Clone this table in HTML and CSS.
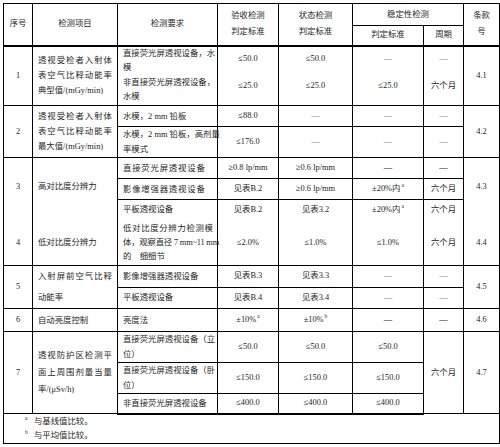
FILE: index.html
```html
<!DOCTYPE html>
<html lang="zh-CN">
<head>
<meta charset="utf-8">
<title>透视设备检测要求</title>
<link rel="stylesheet" href="styles.css">
</head>
<body>
<div class="page">
<table class="spec">
  <colgroup>
    <col class="c1"><col class="c2"><col class="c3"><col class="c4"><col class="c5"><col class="c6"><col class="c7"><col class="c8">
  </colgroup>
  <thead>
    <tr class="h-a">
      <th rowspan="2">序号</th>
      <th rowspan="2">检测项目</th>
      <th rowspan="2">检测要求</th>
      <th rowspan="2" class="two">验收检测<br>判定标准</th>
      <th rowspan="2" class="two">状态检测<br>判定标准</th>
      <th colspan="2">稳定性检测</th>
      <th rowspan="2" class="two">条款<br>号</th>
    </tr>
    <tr class="h-b">
      <th>判定标准</th>
      <th>周期</th>
    </tr>
  </thead>
  <tbody>
    <tr class="r-1">
      <td>1</td>
      <td class="item"><div class="jl">透视受检者入射体</div><div class="jl">表空气比释动能率</div><div>典型值/(mGy/min)</div></td>
      <td class="req r1req"><div class="jl">直接荧光屏透视设备，水</div><div>模</div><div class="jl">非直接荧光屏透视设备，</div><div>水模</div></td>
      <td class="pair"><div>≤50.0</div><div class="p2">≤25.0</div></td>
      <td class="pair"><div>≤50.0</div><div class="p2">≤25.0</div></td>
      <td class="pair"><div class="dash">—</div><div class="p2">≤25.0</div></td>
      <td class="pair"><div class="dash">—</div><div class="p2">六个月</div></td>
      <td>4.1</td>
    </tr>
    <tr class="r-2a">
      <td rowspan="2">2</td>
      <td rowspan="2" class="item"><div class="jl">透视受检者入射体</div><div class="jl">表空气比释动能率</div><div>最大值/(mGy/min)</div></td>
      <td class="req">水模，2 mm 铅板</td>
      <td>≤88.0</td>
      <td class="dash">—</td>
      <td class="dash">—</td>
      <td class="dash">—</td>
      <td rowspan="2">4.2</td>
    </tr>
    <tr class="r-2b">
      <td class="req"><div class="jl">水模，2 mm 铅板，高剂量</div><div>率模式</div></td>
      <td>≤176.0</td>
      <td class="dash">—</td>
      <td class="dash">—</td>
      <td class="dash">—</td>
    </tr>
    <tr class="r-3a">
      <td rowspan="3" class="dual"><div class="d1">3</div><div class="d2">4</div></td>
      <td rowspan="3" class="dual item"><div class="d1">高对比度分辨力</div><div class="d2">低对比度分辨力</div></td>
      <td class="req wide">直接荧光屏透视设备</td>
      <td>≥0.8 lp/mm</td>
      <td>≥0.6 lp/mm</td>
      <td class="dash strong">—</td>
      <td class="dash strong">—</td>
      <td rowspan="3" class="dual"><div class="d1">4.3</div><div class="d2">4.4</div></td>
    </tr>
    <tr class="r-3b">
      <td class="req wide">影像增强器透视设备</td>
      <td>见表B.2</td>
      <td>≥0.6 lp/mm</td>
      <td>±20%内<sup>a</sup></td>
      <td>六个月</td>
    </tr>
    <tr class="r-3c">
      <td class="req stack"><div class="s1">平板透视设备</div><div class="s3"><div class="jl">低对比度分辨力检测模</div><div class="jl tight">体，观察直径 7 mm~11 mm</div><div>的　细细节</div></div></td>
      <td class="stack"><div class="s1">见表B.2</div><div class="s2">≤2.0%</div></td>
      <td class="stack"><div class="s1">见表3.2</div><div class="s2">≤1.0%</div></td>
      <td class="stack"><div class="s1">±20%内<sup>a</sup></div><div class="s2">≤1.0%</div></td>
      <td class="stack"><div class="s1">六个月</div><div class="s2">六个月</div></td>
    </tr>
    <tr class="r-5a">
      <td rowspan="2">5</td>
      <td rowspan="2" class="item loose"><div class="jl">入射屏前空气比释</div><div>动能率</div></td>
      <td class="req">影像增强器透视设备</td>
      <td>见表B.3</td>
      <td>见表3.3</td>
      <td class="dash">—</td>
      <td class="dash">—</td>
      <td rowspan="2">4.5</td>
    </tr>
    <tr class="r-5b">
      <td class="req">平板透视设备</td>
      <td>见表B.4</td>
      <td>见表3.4</td>
      <td class="dash">—</td>
      <td class="dash">—</td>
    </tr>
    <tr class="r-6">
      <td>6</td>
      <td class="item">自动亮度控制</td>
      <td class="req">亮度法</td>
      <td>±10%<sup>a</sup></td>
      <td>±10%<sup>b</sup></td>
      <td class="dash strong">—</td>
      <td class="dash strong">—</td>
      <td>4.6</td>
    </tr>
    <tr class="r-7a">
      <td rowspan="3">7</td>
      <td rowspan="3" class="item mid"><div class="jl">透视防护区检测平</div><div class="jl">面上周围剂量当量</div><div>率/(μSv/h)</div></td>
      <td class="req"><div class="jl">直接荧光屏透视设备（立</div><div>位）</div></td>
      <td>≤50.0</td>
      <td>≤50.0</td>
      <td>≤50.0</td>
      <td rowspan="3">六个月</td>
      <td rowspan="3">4.7</td>
    </tr>
    <tr class="r-7b">
      <td class="req"><div class="jl">直接荧光屏透视设备（卧</div><div>位）</div></td>
      <td>≤150.0</td>
      <td>≤150.0</td>
      <td>≤150.0</td>
    </tr>
    <tr class="r-7c">
      <td class="req">非直接荧光屏透视设备</td>
      <td>≤400.0</td>
      <td>≤400.0</td>
      <td>≤400.0</td>
    </tr>
    <tr class="r-fn">
      <td colspan="8" class="notes">
        <div><span class="mark">a</span>与基线值比较。</div>
        <div><span class="mark">b</span>与平均值比较。</div>
      </td>
    </tr>
  </tbody>
</table>
</div>
</body>
</html>
```
FILE: styles.css
```css
html, body {
  margin: 0;
  padding: 0;
  background: #ffffff;
}

.page {
  padding: 3px 0 0 3px;
}

.spec {
  border-collapse: collapse;
  table-layout: fixed;
  width: 496px;
  font-family: "Liberation Serif", "Noto Sans CJK SC", serif;
  font-size: 8.4px;
  line-height: 14px;
  color: #262626;
}

.c1 { width: 29px; }
.c2 { width: 85px; }
.c3 { width: 100px; }
.c4 { width: 61px; }
.c5 { width: 74px; }
.c6 { width: 71px; }
.c7 { width: 40px; }
.c8 { width: 36px; }

.spec th,
.spec td {
  border: 1px solid #000;
  padding: 0 3px;
  text-align: center;
  vertical-align: middle;
  font-weight: 400;
  white-space: nowrap;
}

.spec th.two {
  line-height: 16px;
}

.h-a { height: 22px; }
.h-b { height: 20px; }
.h-b th,
.h-a th[rowspan] {
  border-bottom-width: 2px;
}

.r-1 { height: 60px; }
.r-2a { height: 21px; }
.r-2b { height: 30px; }
.r-3a { height: 21px; }
.r-3b { height: 21px; }
.r-3c { height: 66px; }
.r-5a { height: 21px; }
.r-5b { height: 21px; }
.r-6 { height: 23px; }
.r-7a { height: 30px; }
.r-7b { height: 30px; }
.r-7c { height: 20px; }
.r-fn { height: 30px; }

.r-7c td {
  border-bottom-width: 2px;
}

.spec td.item {
  text-align: left;
  padding: 0 5px 0 5px;
  line-height: 15px;
}

.spec td.item.loose {
  line-height: 21px;
}

.spec td.item.mid {
  line-height: 17px;
}

.jl {
  text-align: justify;
  text-align-last: justify;
}

.spec td.req {
  text-align: left;
  padding: 0 4px 0 5px;
  line-height: 15px;
}

.spec td.req.wide {
  letter-spacing: 0.8px;
}

.spec td.r1req {
  line-height: 14.6px;
}

.spec td.pair {
  padding-bottom: 6px;
}

.p2 {
  margin-top: 13px;
}

.dash {
  color: #8a8a8a;
}

.dash.strong {
  color: #1a1a1a;
}

.spec td.dual {
  vertical-align: top;
}

.d1 {
  margin-top: 22px;
  line-height: 14px;
}

.d2 {
  margin-top: 42px;
  line-height: 14px;
}

.spec td.stack {
  vertical-align: top;
  padding-top: 3px;
}

.s1 {
  line-height: 14px;
}

.s2 {
  margin-top: 5px;
  height: 42px;
  display: flex;
  align-items: center;
  justify-content: center;
}

.s3 {
  margin-top: 5px;
  line-height: 14px;
}

.tight {
  letter-spacing: -0.2px;
}

sup {
  font-size: 5.5px;
  line-height: 0;
  vertical-align: 4px;
  margin-left: 1px;
}

.spec td.notes {
  text-align: left;
  padding: 0 0 0 21px;
  line-height: 14px;
}

.mark {
  display: inline-block;
  width: 9px;
  font-size: 5.5px;
  vertical-align: 4px;
  line-height: 0;
}
```
